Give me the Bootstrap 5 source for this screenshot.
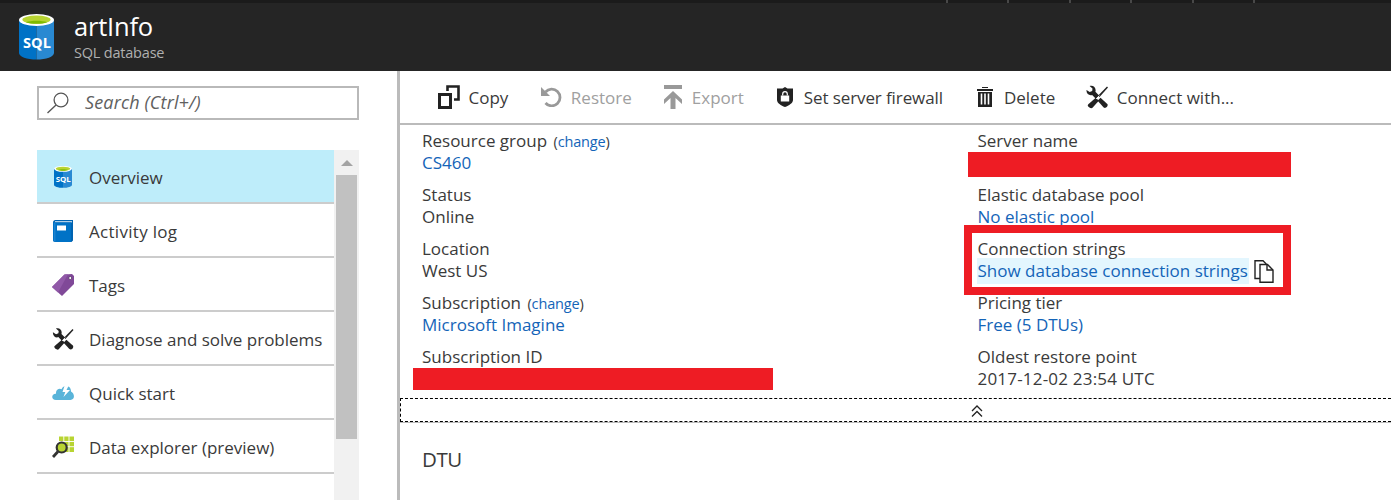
<!DOCTYPE html>
<html lang="en">
<head>
<meta charset="utf-8">
<meta name="viewport" content="width=device-width, initial-scale=1">
<title>artInfo - SQL database</title>
<link href="https://cdn.jsdelivr.net/npm/bootstrap@5.3.0/dist/css/bootstrap.min.css" rel="stylesheet">
<style>
  body { font-family: "Open Sans", "Noto Sans", sans-serif; font-weight: 400; font-size: 17px; line-height: 22px; color: #3a3a3a; height: 500px; overflow: hidden; background: #fff; }
  a { color: #1464b8; text-decoration: none; }
  svg { display: block; flex: none; }
  .topstrip { height: 3px; background: #1b1b1b; padding-left: 945.5px; }
  .topstrip i { width: 2px; height: 3px; background: #484848; margin-right: 59.5px; }
  .blade-head { height: 68px; background: #252525; padding-left: 19px; }
  .blade-title { font-size: 25.5px; line-height: 30px; color: #fff; letter-spacing: -.2px; }
  .blade-sub { font-size: 14.5px; line-height: 20px; color: #b0b0b0; letter-spacing: -.2px; }
  .sidebar { width: 397px; padding: 15px 38px 0 37px; }
  .main { border-left: 3px solid #bbb; min-width: 0; }
  .searchbox { height: 34px; border: 2px solid #b9b9b9; padding-left: 8px; font-style: italic; color: #606060; font-size: 18px; }
  .searchbox span { margin: -2px 0 0 16px; letter-spacing: .15px; }
  .menu-wrap { margin-top: 30px; height: 350px; }
  .menu-list { width: 297px; overflow: hidden; }
  .menu-list a { height: 54px; flex: none; border-bottom: 2px solid #ccc; padding: 2px 0 0 14.5px; color: #3a3a3a; }
  .menu-list a.current { background: #beedfa; }
  .menu-list a span { margin-left: 15.5px; padding-top: 2px; }
  .track { width: 25px; background: #f1f1f1; }
  .track svg { margin: 10px 0 9px 7px; }
  .thumb { width: 21px; height: 264px; margin-left: 2px; background: #c1c1c1; }
  .toolbar { height: 54px; border-bottom: 2px solid #bbb; }
  .tool span { padding-top: 2px; }
  .tool.off { color: #a0a0a0; }
  .fields { height: 273px; padding: 5px 0 0 22px; }
  .fcol { width: 555.5px; }
  .field { margin-bottom: 10px; height: 44px; white-space: nowrap; }
  .chg { font-size: 14.5px; line-height: 1; margin-left: 2px; letter-spacing: -.15px; }
  .redact { background: #ee1c24; }
  .hl { background: #e3f6fe; height: 26px; line-height: 22px; padding: 2px 1px; margin: -2px -1px; }
  .marker { left: -13.5px; top: -13px; width: 327px; height: 70px; border: 8px solid #ee1c24; pointer-events: none; }
  .collapse-bar { height: 24px; border: 1px dashed #000; border-right: 0; box-shadow: 0 1px 0 #bbb; }
  .section-title { font-size: 20.5px; line-height: 28px; margin: 23px 0 0 22px; font-weight: 400; letter-spacing: -.4px; }
</style>
</head>
<body class="d-flex flex-column">

<div class="topstrip d-flex flex-shrink-0"><i></i><i></i><i></i><i></i><i></i><i></i></div>
<header class="blade-head d-flex flex-shrink-0">
  <svg width="35" height="46" viewBox="0 0 34 46" preserveAspectRatio="none" style="margin-top:11px">
    <g id="can">
      <path d="M0 6v33c0 3.800 7.600 6.500 17 6.500V6z" fill="#0072c6"/>
      <path d="M34 6v33c0 3.800-7.600 6.500-17 6.500V6z" fill="#2989d2"/>
      <ellipse cx="17" cy="6" rx="17" ry="6" fill="#fff"/>
      <ellipse cx="17" cy="5.700" rx="13.700" ry="4.100" fill="#b8d432"/>
      <path d="M6.500 8.200C12 6.200 22 6.200 27.500 8.200 22 10.400 12 10.400 6.500 8.200z" fill="#7fba00"/>
    </g>
    <text x="17.500" y="34" text-anchor="middle" font-weight="700" font-size="14.500" textLength="27" lengthAdjust="spacingAndGlyphs" fill="#fff">SQL</text>
  </svg>
  <div class="pt-2" style="margin-left:20px">
    <div class="blade-title">artInfo</div>
    <div class="blade-sub" style="margin-top:2px">SQL database</div>
  </div>
</header>

<div class="d-flex flex-grow-1">
  <aside class="sidebar flex-shrink-0">
    <div class="searchbox d-flex align-items-center">
      <svg width="22" height="22" viewBox="0 0 22 22" fill="none" stroke="#555" stroke-width="1.300"><circle cx="14" cy="8" r="6.900"/><path d="M9 13L.5 21"/></svg>
      <span>Search (Ctrl+/)</span>
    </div>
    <div class="menu-wrap d-flex">
      <nav class="menu-list d-flex flex-column">
        <a class="current d-flex align-items-center" href="#"><svg width="18" height="22" viewBox="0 0 34 46" preserveAspectRatio="none" style="margin:0 2px"><use href="#can"/><text x="17.500" y="33" text-anchor="middle" font-weight="700" font-size="15" fill="#fff">SQL</text></svg><span>Overview</span></a>
        <a class="d-flex align-items-center" href="#"><svg width="22" height="22" viewBox="0 0 22 22"><path d="M1 2.500Q1 0 3.500 0H21v20.500L19.500 22H3.500Q1 22 1 20z" fill="#0063b1"/><path d="M3 1.300h17v1H3z" fill="#fff"/><path d="M1 2.500h18V22H3.500Q1 22 1 20z" fill="#0072c6"/><path d="M2.800 2.500v19" stroke="#2989d2"/><path d="M5 5.500h9v5H5z" fill="#fff"/></svg><span style="letter-spacing:.3px">Activity log</span></a>
        <a class="d-flex align-items-center" href="#"><svg width="22" height="22" viewBox="0 0 22 22"><path d="M0 13L12.500.500 20 0l2 2v8L10 22z" fill="#804998"/><path d="M0 13L12.500.500 16 .300 6 18.500z" fill="#9159a8"/><circle cx="18.200" cy="4" r="1.500" fill="#fff" stroke="#4f2d5f" stroke-width=".7"/></svg><span>Tags</span></a>
        <a class="d-flex align-items-center" href="#"><svg width="22" height="22" viewBox="0 0 22 23">
          <g id="tools">
            <path d="M21 1l1 1-8.500 9.500-1.500-1.300z" fill="#222"/>
            <path d="M9.800 12.200l3 3-6.300 7.100c-1.500 1.600-6-1.700-4.200-3.600z" fill="#222"/>
            <path d="M3.600.500C7.500-.700 10.500 2.500 9.400 6.300l3.700 3.700-3.200 3.200-3.800-3.700C3.500 10.700 0 8.200.500 4.400l3.200 2.200 2.500-1 .3-2.500z" fill="#222"/>
            <path d="M14.500 12.300l6.800 6.100c1.500 2-1.600 5.300-3.600 3.600l-6.100-6.700z" fill="#222"/>
            <path d="M10 13.500l3.500-3.500" stroke="#fff" stroke-width=".8"/>
          </g></svg><span>Diagnose and solve problems</span></a>
        <a class="d-flex align-items-center" href="#"><svg width="22" height="22" viewBox="0 0 22 22"><path d="M4 18C-1.500 18-.500 11.500 4 11.800 3.500 7 8 6 9.500 7.300 11.500 2.500 19 3 19 9.500c4 2 4 8.500-.5 8.500z" fill="#59b4d9"/><path d="M12.500 4h4L14.500 8H18l-6.500 7 1.800-5H10.500z" fill="#fff"/></svg><span>Quick start</span></a>
        <a class="d-flex align-items-center" href="#"><svg width="22" height="22" viewBox="0 0 22 22"><path d="M7 .500h15V16H7z" fill="#b8d432"/><path d="M7 5.500h15M7 10.700h15M11.800 0v16M17 0v16" stroke="#fff" stroke-width=".9"/><circle cx="9.700" cy="11.500" r="5" fill="#b8d432" stroke="#333" stroke-width="2.200"/><path d="M6 15.500L1 21" stroke="#333" stroke-width="2.800"/></svg><span>Data explorer (preview)</span></a>
      </nav>
      <div class="track"><svg width="12" height="6"><path d="M0 6L6 0l6 6z" fill="#a3a3a3"/></svg><div class="thumb"></div></div>
    </div>
  </aside>

  <main class="main flex-grow-1 d-flex flex-column">
    <div class="toolbar d-flex align-items-center flex-shrink-0">
      <div class="tool d-flex align-items-center" style="margin-left:38px"><svg width="22" height="24" viewBox="0 0 22 24" fill="none" stroke="#222" stroke-width="3"><path d="M1.500 9.500h11v13h-11z"/><path d="M9.500 6V1.500h11v13H16" stroke-width="2.600"/></svg><span style="margin-left:8.500px">Copy</span></div>
      <div class="tool off d-flex align-items-center" style="margin-left:32.500px"><svg width="22" height="20" viewBox="0 0 22 20"><path d="M4.500 5A8.300 8.300 0 1 1 4.500 16" fill="none" stroke="#999" stroke-width="2.800"/><path d="M0 0l9 9H0z" fill="#999"/></svg><span style="margin-left:8px">Restore</span></div>
      <div class="tool off d-flex align-items-center" style="margin-left:32px"><svg width="18" height="24" viewBox="0 0 18 24" fill="#999"><path d="M0 0h18v4H0zM9 6l9 8.500v4.500l-6.500-6V24h-5V13L0 19v-4.500z"/></svg><span style="margin-left:10px">Export</span></div>
      <div class="tool d-flex align-items-center" style="margin-left:33px"><svg width="16" height="20" viewBox="0 0 16 20"><path d="M8 0l2.500 1.500H16V13c0 3-4 5.500-8 7-4-1.500-8-4-8-7V1.500h5.500z" fill="#222"/><path d="M3.800 8.500h8.400v6H3.800z" fill="#fff"/><path d="M5.700 8.500V7a2.300 2.300 0 0 1 4.600 0v1.500" fill="none" stroke="#fff" stroke-width="1.200"/></svg><span style="margin-left:11px;letter-spacing:-.1px">Set server firewall</span></div>
      <div class="tool d-flex align-items-center" style="margin-left:34px"><svg width="16" height="20" viewBox="0 0 16 20"><path d="M5 0h6v1H5zM0 2h16v2H0zM1 5h14v15H1z" fill="#222"/><path d="M4.500 6.500v11M8 6.500v11M11.500 6.500v11" stroke="#fff" stroke-width="1.600"/></svg><span style="margin-left:11px">Delete</span></div>
      <div class="tool d-flex align-items-center" style="margin-left:30.500px"><svg width="22" height="24" viewBox="0 0 22 23"><use href="#tools"/></svg><span style="margin-left:9px">Connect with...</span></div>
    </div>

    <div class="fields d-flex flex-shrink-0">
      <div class="fcol flex-shrink-0">
        <div class="field">Resource group <span class="chg">(<a href="#">change</a>)</span><br><a href="#">CS460</a></div>
        <div class="field">Status<br>Online</div>
        <div class="field">Location<br>West US</div>
        <div class="field">Subscription <span class="chg">(<a href="#">change</a>)</span><br><a href="#">Microsoft Imagine</a></div>
        <div class="field">Subscription ID<div class="redact" style="width:360px;height:22px;margin-left:-9px"></div></div>
      </div>
      <div class="flex-grow-1">
        <div class="field">Server name<div class="redact" style="width:323px;height:25px;margin-left:-9.500px"></div></div>
        <div class="field">Elastic database pool<br><a href="#">No elastic pool</a></div>
        <div class="field position-relative"><div class="position-relative z-1">Connection strings</div>
          <div class="d-flex"><a class="hl" href="#">Show database connection strings</a>
          <svg width="20" height="23" viewBox="0 0 20 23" style="margin-left:6.500px" fill="#fff" stroke="#222" stroke-width="1.400"><path d="M1 .7h8l3 3v14.800H1z"/><path d="M6 4.500h7.500l5.500 5.500v12.300H6z"/><path d="M13 4.500V10h6" fill="none"/></svg></div>
          <div class="marker position-absolute"></div>
        </div>
        <div class="field">Pricing tier<br><a href="#">Free (5 DTUs)</a></div>
        <div class="field">Oldest restore point<br><span style="letter-spacing:.2px">2017-12-02 23:54 UTC</span></div>
      </div>
    </div>

    <div class="collapse-bar flex-shrink-0"><svg width="12" height="12" viewBox="0 0 12 12" fill="none" stroke="#222" stroke-width="1.300" style="margin:6px 0 0 570px"><path d="M1 6l5-5 5 5M1 11.500l5-5 5 5"/></svg></div>
    <h2 class="section-title">DTU</h2>
  </main>
</div>
<script src="https://cdn.jsdelivr.net/npm/bootstrap@5.3.0/dist/js/bootstrap.bundle.min.js"></script>
</body>
</html>
